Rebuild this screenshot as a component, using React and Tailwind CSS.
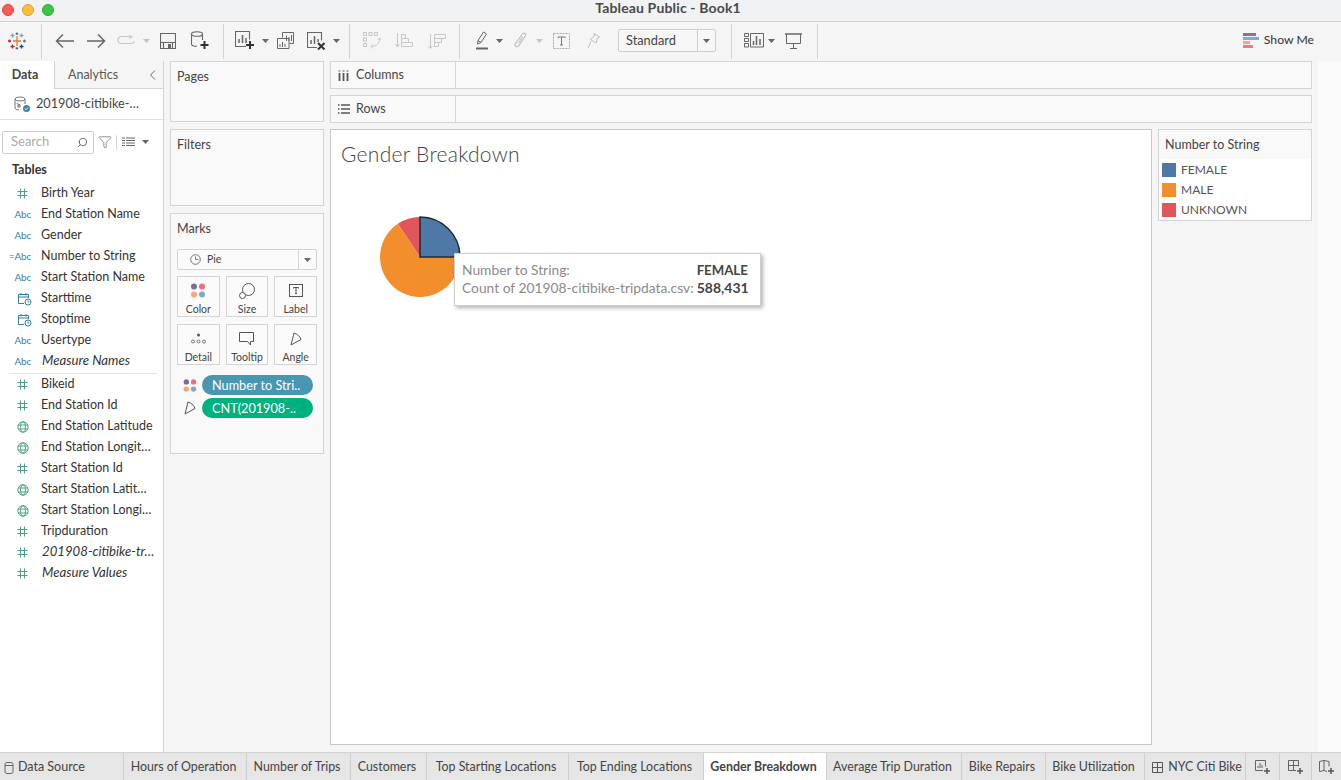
import { Search, Filter } from 'lucide-react';

const Caret = ({ className = '', color = '#666' }) => (
  <svg width="7" height="4" viewBox="0 0 7 4" className={`shrink-0 ${className}`}>
    <path d="M0 0h7L3.500 4z" fill={color} />
  </svg>
);

const Sep = ({ className = '' }) => <div className={`w-px h-[35px] mt-[2px] bg-[#d4d4d4] shrink-0 ${className}`} />;

const Hash = () => (
  <svg width="11" height="11" viewBox="0 0 11 11" fill="none" stroke="#4e9f84" strokeWidth="1" className="mr-[4px]">
    <path d="M3.500 0.500v10M7.500 0.500v10M0.500 3.500h10M0.500 7.500h10" />
  </svg>
);

const Globe = () => (
  <svg width="12" height="12" viewBox="0 0 12 12" fill="none" stroke="#3f9c7e" strokeWidth="0.9" className="mr-[3px]">
    <circle cx="6" cy="6" r="5.200" />
    <ellipse cx="6" cy="6" rx="2.400" ry="5.200" />
    <path d="M1 4h10M1 8h10" />
  </svg>
);

const Calendar = () => (
  <svg width="15" height="14" viewBox="0 0 15 14" fill="none" stroke="#2f7f9f" strokeWidth="1">
    <path d="M7 11.500H1.500v-9h10V6M1.500 5h10M4 1v2.500M9 1v2.500" />
    <circle cx="11" cy="10" r="3" />
    <path d="M11 8.500V10h1.400" />
  </svg>
);

const Abc = ({ eq }) => (
  <span className="block pr-[1px] -mt-[1px] text-[10px] leading-none text-[#3d7f9c] tracking-[-0.2px]">{eq ? '=Abc' : 'Abc'}</span>
);

const Field = ({ type, name, italic }) => {
  return (
    <div className="flex items-center h-[21px]">
      <div className="w-[32px] flex justify-end items-center shrink-0">
        {type === 'hash' && <Hash />}
        {type === 'globe' && <Globe />}
        {type === 'cal' && <Calendar />}
        {type === 'abc' && <Abc />}
        {type === 'eq' && <Abc eq />}
      </div>
      <span className={`whitespace-nowrap text-[#333] ${italic ? 'ml-[10px] -mt-[2px] italic text-[13.2px]' : 'ml-[9px] text-[12.5px]'}`}>{name}</span>
    </div>
  );
};

const dims = [
  ['hash', 'Birth Year'],
  ['abc', 'End Station Name'],
  ['abc', 'Gender'],
  ['eq', 'Number to String'],
  ['abc', 'Start Station Name'],
  ['cal', 'Starttime'],
  ['cal', 'Stoptime'],
  ['abc', 'Usertype'],
  ['abc', 'Measure Names', true],
];

const measures = [
  ['hash', 'Bikeid'],
  ['hash', 'End Station Id'],
  ['globe', 'End Station Latitude'],
  ['globe', 'End Station Longit…'],
  ['hash', 'Start Station Id'],
  ['globe', 'Start Station Latit…'],
  ['globe', 'Start Station Longi…'],
  ['hash', 'Tripduration'],
  ['hash', '201908-citibike-tr…', true],
  ['hash', 'Measure Values', true],
];

const MarkBtn = ({ label, children }) => (
  <div className="h-[41px] border border-[#d4d4d4] bg-[#fbfbfb] flex flex-col items-center">
    <div className="h-[23px] flex items-center justify-center mt-[2px]">{children}</div>
    <span className="mt-[1px] text-[10.5px] leading-[13px] text-[#444]">{label}</span>
  </div>
);

const Dots = () => (
  <svg width="16" height="15" viewBox="0 0 16 15">
    <circle cx="4" cy="3.500" r="3" fill="#7f6b96" />
    <circle cx="12" cy="3.500" r="3" fill="#ef6f7f" />
    <circle cx="4" cy="11.500" r="3" fill="#f2a878" />
    <circle cx="12" cy="11.500" r="3" fill="#7fa8d0" />
  </svg>
);

const Angle = () => (
  <svg width="12" height="14" viewBox="0 0 12 14" fill="none" stroke="#555">
    <path d="M1 13L4 1c3.500 1 6 3.500 7 6.500z" />
  </svg>
);

const tabs = [
  ['w-[123px]', 'Hours of Operation'],
  ['w-[104px]', 'Number of Trips'],
  ['w-[76px]', 'Customers'],
  ['w-[142px]', 'Top Starting Locations'],
  ['w-[135px]', 'Top Ending Locations'],
  ['w-[123px]', 'Gender Breakdown', true],
  ['w-[135px]', 'Average Trip Duration'],
  ['w-[84px]', 'Bike Repairs'],
  ['w-[99px]', 'Bike Utilization'],
];

const legend = [
  ['bg-[#4e79a7]', 'FEMALE'],
  ['bg-[#f28e2b]', 'MALE'],
  ['bg-[#e15759]', 'UNKNOWN'],
];

const App = () => {
  return (
    <div className="w-[1341px] h-[780px] overflow-hidden flex flex-col bg-[#f5f5f5] font-['Lato',sans-serif] text-[#333]">
      {/* title bar */}
      <div className="h-[22px] shrink-0 bg-[#f1f2f4] border-b border-[#d2d2d2] flex items-center relative">
        <div className="flex gap-[8px] ml-[2px] mb-[1px]">
          <div className="w-[12px] h-[12px] rounded-full bg-[#f95c57] border border-[#e0443e]" />
          <div className="w-[12px] h-[12px] rounded-full bg-[#fdbb40] border border-[#dea123]" />
          <div className="w-[12px] h-[12px] rounded-full bg-[#3ec548] border border-[#2aac2c]" />
        </div>
        <div className="absolute left-0 right-[5px] top-0 text-center text-[14px] tracking-[0.15px] leading-[15px] font-bold text-[#4a4a4a]">Tableau Public - Book1</div>
      </div>

      {/* toolbar */}
      <div className="h-[39px] shrink-0 bg-[#f5f5f5] flex items-center pb-[2px]">
        <svg width="18" height="18" viewBox="0 0 18 18" className="ml-[8px] shrink-0" strokeWidth="1.300" fill="none">
          <path d="M9 4v10M5 9h8" stroke="#e8762b" />
          <path d="M4.500 1.500v4M2.500 3.500h4M13.500 1.500v4M11.500 3.500h4" stroke="#7ba7c4" />
          <path d="M4.500 12.500v4M2.500 14.500h4" stroke="#c72035" />
          <path d="M13.500 12.500v4M11.500 14.500h4" stroke="#1f447a" />
          <path d="M1.500 7.500v3M0 9h3" stroke="#c72035" />
          <path d="M16.500 7.500v3M15 9h3" stroke="#59879b" />
          <path d="M9 .5v2.500M7.700 1.700h2.600M9 15v2.500M7.700 16.300h2.600" stroke="#5b6591" />
        </svg>
        <Sep className="ml-[15px]" />
        <svg width="19" height="16" viewBox="0 0 19 16" className="ml-[13px] shrink-0" fill="none" stroke="#666" strokeWidth="1.500">
          <path d="M19 8H1.500M8 1.500L1.500 8 8 14.500" />
        </svg>
        <svg width="19" height="16" viewBox="0 0 19 16" className="ml-[13px] shrink-0" fill="none" stroke="#666" strokeWidth="1.500">
          <path d="M0 8h17.500M11 1.500L17.500 8 11 14.500" />
        </svg>
        <svg width="19" height="11" viewBox="0 0 19 11" className="ml-[11px] shrink-0" fill="none" stroke="#c8c8c8" strokeWidth="1.200">
          <path d="M14 1.500H4.500a3.500 3.500 0 0 0 0 7h10a3.500 3.500 0 0 0 3-2M12 .5l3 1.500-3 1.500" />
        </svg>
        <Caret color="#c4c4c4" className="ml-[7px]" />
        <svg width="16" height="16" viewBox="0 0 16 16" className="ml-[10px] shrink-0" fill="none" stroke="#666" strokeWidth="1.100">
          <path d="M.5.500h15v15H.500zM.500 9.500h15M3.500 15.500v-6h9v6" />
          <rect x="8" y="11" width="3" height="4" fill="#666" stroke="none" />
        </svg>
        <svg width="18" height="19" viewBox="0 0 18 19" className="ml-[15px] shrink-0" fill="none" stroke="#666" strokeWidth="1.100">
          <ellipse cx="6" cy="3" rx="5.500" ry="2.300" />
          <path d="M.5 3v10c0 1.400 2.200 2.300 5.500 2.300M11.500 3v6" />
          <path d="M13.500 10v8M9.500 14h8" stroke="#333" strokeWidth="2" />
        </svg>
        <Sep className="ml-[14px]" />
        <svg width="21" height="19" viewBox="0 0 21 19" className="ml-[11px] shrink-0" fill="none" stroke="#666" strokeWidth="1.100">
          <path d="M11 15.500H.5V.5h14v8" />
          <path d="M4 12V8M7.500 12V4M11 12V7" strokeWidth="1.500" />
          <path d="M15 10v8M11 14h8" stroke="#333" strokeWidth="2" />
        </svg>
        <Caret className="ml-[6px]" />
        <svg width="17" height="17" viewBox="0 0 17 17" className="ml-[8px] shrink-0" fill="none" stroke="#666" strokeWidth="1">
          <path d="M5.500 5.500V.5h11v11h-4" />
          <path d="M.5 6.500h11.500v10H.500z" fill="#f5f5f5" />
          <path d="M3 15v-3M5.500 15v-5M8 15v-3M9.500 9V3.500M12 9V5M14.500 9V3" />
        </svg>
        <svg width="19" height="18" viewBox="0 0 19 18" className="ml-[13px] shrink-0" fill="none" stroke="#666" strokeWidth="1.100">
          <path d="M10 15.500H.5V.5h14v8" />
          <path d="M4 12V8M7.500 12V4M11 10V7" strokeWidth="1.500" />
          <path d="M11 11l6.500 6.500M17.500 11L11 17.500" stroke="#333" strokeWidth="2" />
        </svg>
        <Caret className="ml-[7px]" />
        <Sep className="ml-[9px]" />
        <svg width="18" height="17" viewBox="0 0 18 17" className="ml-[13px] shrink-0" fill="none" stroke="#c8c8c8" strokeWidth="1">
          <rect x=".5" y=".5" width="3" height="3" />
          <rect x="6" y=".5" width="3" height="3" />
          <rect x="11.500" y=".5" width="3" height="3" />
          <rect x=".5" y="6" width="3" height="3" />
          <rect x=".5" y="11.500" width="3" height="3" />
          <path d="M16.500 6c.5 5-2.500 8-8 8.500M14.500 8l2-2 1.500 2M10 12.500l-2 2 2 2" />
        </svg>
        <svg width="18" height="16" viewBox="0 0 18 16" className="ml-[14px] shrink-0" fill="none" stroke="#c8c8c8" strokeWidth="1">
          <path d="M2.500 0v13M.5 11l2 3 2-3" />
          <path d="M6.500 1.500h4v4h-4zM6.500 5.500h7v4h-7zM6.500 9.500h11v4h-11z" />
        </svg>
        <svg width="18" height="16" viewBox="0 0 18 16" className="ml-[15px] shrink-0" fill="none" stroke="#c8c8c8" strokeWidth="1">
          <path d="M2.500 1v14M.5 13l2 2.500 2-2.500" />
          <path d="M6.500 1.500h11v4h-11zM6.500 5.500h7v4h-7zM6.500 9.500h4v4h-4z" />
        </svg>
        <Sep className="ml-[13px]" />
        <svg width="12" height="19" viewBox="0 0 12 19" className="ml-[16px] shrink-0" fill="none" stroke="#666">
          <path d="M1.500 13l.5-3.500L7.500 1l3 2L5 11.500zM2 9.500l3 2" />
          <path d="M0 17.500h12" strokeWidth="2" />
        </svg>
        <Caret className="ml-[8px]" />
        <svg width="13" height="17" viewBox="0 0 13 17" className="ml-[11px] shrink-0" fill="none" stroke="#bdbdbd" strokeWidth="1.100">
          <path d="M3 9.500L8.500 2c1.500-1.800 4-.2 3 1.700L5 13.500c-1.500 2.500-5 .8-3.800-1.800L7.500 3.500M4.500 11L9 4.500" />
        </svg>
        <Caret color="#c4c4c4" className="ml-[9px]" />
        <svg width="17" height="16" viewBox="0 0 17 16" className="ml-[10px] shrink-0" fill="none">
          <rect x=".5" y=".5" width="16" height="15" stroke="#aaa" strokeDasharray="2 1" />
          <path d="M5 5V4h7v1M8.500 4v8M7 12h3" stroke="#777" />
        </svg>
        <svg width="13" height="16" viewBox="0 0 13 16" className="ml-[17px] shrink-0" fill="none" stroke="#bdbdbd">
          <path d="M7 .5l5.500 3.500-2 1-1.500 5-5.500-3.500 4-3.500zM4 8.500L1 15" />
        </svg>
        <div className="ml-[18px] w-[98px] h-[23px] shrink-0 border border-[#cfcfcf] rounded-[2px] bg-[#f7f7f7] flex items-center">
          <span className="flex-1 pl-[7px] text-[12.8px] text-[#444]">Standard</span>
          <div className="w-[18px] h-full border-l border-[#cfcfcf] flex items-center justify-center">
            <Caret />
          </div>
        </div>
        <Sep className="ml-[15px]" />
        <svg width="20" height="15" viewBox="0 0 20 15" className="ml-[12px] shrink-0" fill="none" stroke="#666">
          <path d="M.5.500h4v3h-4zM.5 5.500h4v3h-4zM.5 10.500h4v3.500h-4zM6.500.5h13v13.500h-13z" />
          <path d="M9.500 12V8M12.500 12V3M16 12V6" strokeWidth="1.500" />
        </svg>
        <Caret className="ml-[4px]" />
        <svg width="17" height="16" viewBox="0 0 17 16" className="ml-[10px] shrink-0" fill="none" stroke="#666">
          <path d="M0 1h17" strokeWidth="1.500" />
          <path d="M1.500 1v9.500h14V1M8.500 10.500V15M5 15.500h7" />
        </svg>
        <Sep className="ml-[15px]" />
        <div className="ml-auto mr-[27px] flex items-center gap-[5px]">
          <svg width="16" height="15" viewBox="0 0 16 15">
            <rect x="0" y="0" width="13" height="3" fill="#8a7198" />
            <rect x="0" y="4" width="16" height="3" fill="#85a9d3" />
            <rect x="0" y="8" width="7" height="3" fill="#f3a77a" />
            <rect x="0" y="12" width="10" height="3" fill="#f27a86" />
          </svg>
          <span className="text-[12.2px] text-[#333]">Show Me</span>
        </div>
      </div>

      {/* main */}
      <div className="flex-1 min-h-0 flex">
        {/* data pane */}
        <div className="w-[164px] shrink-0 bg-white border-r border-[#d4d4d4] flex flex-col">
          <div className="h-[28px] shrink-0 flex text-[12.5px]">
            <div className="w-[55px] border-r border-[#d4d4d4] flex items-center justify-center pr-[4px] pt-[1px] font-bold text-[#444]">Data</div>
            <div className="flex-1 bg-[#f5f5f5] border-b border-[#d4d4d4] flex items-center pl-[13px] pt-[1px] text-[#555]">
              Analytics
              <svg width="7" height="10" viewBox="0 0 7 10" className="ml-auto mr-[7px]" fill="none" stroke="#666">
                <path d="M6 .5L1.500 5 6 9.500" />
              </svg>
            </div>
          </div>
          <div className="h-[31px] shrink-0 border-b border-[#e2e2e2] flex items-center">
            <svg width="17" height="17" viewBox="0 0 17 17" className="ml-[14px] shrink-0" fill="none" stroke="#666" strokeWidth=".9">
              <ellipse cx="6" cy="3" rx="5" ry="2" />
              <path d="M1 3v9c0 1 1.500 1.800 4 2M11 3v5M3 7c0 1 1.500 1.500 3 1.500M3 10h4M5 8v4" />
              <circle cx="12.500" cy="12.500" r="3.500" fill="#3d85ab" stroke="none" />
              <path d="M10.800 12.500l1.200 1.200 2-2.200" stroke="#fff" />
            </svg>
            <span className="ml-[5px] text-[12.7px] text-[#444] whitespace-nowrap">201908-citibike-…</span>
          </div>
          <div className="h-[34px] shrink-0 flex items-center pl-[2px] pt-[10px]">
            <div className="w-[92px] h-[23px] border border-[#cfcfcf] rounded-[2px] flex items-center justify-between pl-[8px] pr-[5px]">
              <span className="text-[13px] text-[#aaa]">Search</span>
              <Search size={11} color="#555" strokeWidth={1.8} className="-scale-x-100" />
            </div>
            <Filter size={14} color="#666" strokeWidth={1.200} className="ml-[4px]" />
            <div className="w-px h-[15px] bg-[#d4d4d4] ml-[4px]" />
            <svg width="13" height="10" viewBox="0 0 13 10" className="ml-[5px]" fill="none" stroke="#666">
              <path d="M0 1h3M4 1h9M0 3.500h3M4 3.500h9M0 6h3M4 6h9M0 8.500h3M4 8.500h9" />
            </svg>
            <Caret className="ml-[7px]" />
          </div>
          <div className="pl-[12px] pt-[7px] h-[29px] shrink-0 text-[12.5px] font-bold text-[#333]">Tables</div>
          {dims.map(([t, n, i]) => (
            <Field key={n} type={t} name={n} italic={i} />
          ))}
          <div className="h-px bg-[#e2e2e2] ml-[9px] mr-[6px] mt-[1px]" />
          {measures.map(([t, n, i]) => (
            <Field key={n} type={t} name={n} italic={i} />
          ))}
        </div>

        {/* shelves column */}
        <div className="w-[166px] shrink-0 flex flex-col pl-[6px] pr-[6px]">
          <div className="h-[61px] shrink-0 border border-[#d4d4d4] bg-[#f9f9f9] pl-[6px] pt-[6px] text-[12.5px] text-[#444]">Pages</div>
          <div className="h-[77px] mt-[7px] shrink-0 border border-[#d4d4d4] bg-[#f9f9f9] pl-[6px] pt-[6px] text-[12.5px] text-[#444]">Filters</div>
          <div className="h-[241px] mt-[7px] shrink-0 border border-[#d4d4d4] bg-[#f9f9f9] px-[6px] pt-[7px]">
            <div className="text-[12.5px] leading-[15px] text-[#444]">Marks</div>
            <div className="mt-[13px] h-[21px] border border-[#d4d4d4] rounded-[2px] bg-[#fbfbfb] flex items-center">
              <svg width="11" height="11" viewBox="0 0 11 11" className="ml-[12px]" fill="none" stroke="#777">
                <circle cx="5.500" cy="5.500" r="4.800" />
                <path d="M5.500 2.500v3h3" />
              </svg>
              <span className="ml-[6px] flex-1 text-[10.5px] text-[#444]">Pie</span>
              <div className="w-[18px] h-full border-l border-[#d4d4d4] flex items-center justify-center"><Caret /></div>
            </div>
            <div className="grid grid-cols-3 gap-x-[6px] gap-y-[7px] mt-[6px]">
              <MarkBtn label="Color"><Dots /></MarkBtn>
              <MarkBtn label="Size">
                <svg width="16" height="16" viewBox="0 0 16 16" fill="none" stroke="#555">
                  <circle cx="9.500" cy="6.500" r="6" fill="#fbfbfb" />
                  <circle cx="3.500" cy="12.500" r="3" fill="#fbfbfb" />
                </svg>
              </MarkBtn>
              <MarkBtn label="Label">
                <svg width="14" height="13" viewBox="0 0 14 13" fill="none" stroke="#555">
                  <rect x=".5" y=".5" width="13" height="12" />
                  <path d="M4.500 4.500v-1h5v1M7 3.500v6M6 9.500h2" />
                </svg>
              </MarkBtn>
              <MarkBtn label="Detail">
                <svg width="15" height="11" viewBox="0 0 15 11" fill="none" stroke="#555" strokeWidth=".8">
                  <circle cx="7.500" cy="2" r="1.500" fill="#555" stroke="none" />
                  <circle cx="2" cy="8.500" r="1.500" />
                  <circle cx="7.500" cy="8.500" r="1.500" />
                  <circle cx="13" cy="8.500" r="1.500" />
                </svg>
              </MarkBtn>
              <MarkBtn label="Tooltip">
                <svg width="15" height="14" viewBox="0 0 15 14" fill="none" stroke="#555">
                  <path d="M.5.500h14v9h-3v3.500l-3-3.500H.500z" />
                </svg>
              </MarkBtn>
              <MarkBtn label="Angle"><Angle /></MarkBtn>
            </div>
            <div className="flex items-center mt-[10px]">
              <div className="w-[25px] flex justify-center scale-90"><Dots /></div>
              <div className="w-[111px] h-[20px] rounded-full bg-[#4996b2] text-white text-[12.7px] leading-[20px] pl-[10px] whitespace-nowrap">Number to Stri..</div>
            </div>
            <div className="flex items-center mt-[3px]">
              <div className="w-[25px] flex justify-center"><Angle /></div>
              <div className="w-[111px] h-[20px] rounded-full bg-[#00b180] text-white text-[12.7px] leading-[20px] pl-[10px] whitespace-nowrap">CNT(201908-..</div>
            </div>
          </div>
        </div>

        {/* view area */}
        <div className="flex-1 flex flex-col min-w-0 pr-[6px] pb-[7px]">
          <div className="h-[28px] shrink-0 border border-[#d4d4d4] bg-[#f9f9f9] flex items-center">
            <div className="w-[125px] h-full border-r border-[#d4d4d4] flex items-center pl-[7px]">
              <svg width="11" height="11" viewBox="0 0 11 11" fill="none" stroke="#555" strokeWidth="1.800">
                <path d="M1.500 3v8M5.500 3v8M9.500 3v8" />
                <path d="M.5 1h2M4.500 1h2M8.500 1h2" strokeWidth="1.200" />
              </svg>
              <span className="ml-[7px] text-[12.5px] text-[#444]">Columns</span>
            </div>
          </div>
          <div className="h-[28px] mt-[6px] shrink-0 border border-[#d4d4d4] bg-[#f9f9f9] flex items-center">
            <div className="w-[125px] h-full border-r border-[#d4d4d4] flex items-center pl-[7px]">
              <svg width="12" height="10" viewBox="0 0 12 10" fill="none" stroke="#555" strokeWidth="1.500">
                <path d="M3 1h9M3 5h9M3 9h9M0 1h1.500M0 5h1.500M0 9h1.500" />
              </svg>
              <span className="ml-[6px] text-[12.5px] text-[#444]">Rows</span>
            </div>
          </div>
          <div className="flex-1 min-h-0 flex mt-[6px] gap-[6px]">
            {/* canvas */}
            <div className="w-[822px] shrink-0 h-full border border-[#c6c6c6] bg-white relative pl-[10px] pt-[11px]">
              <div className="text-[21px] leading-[26px] font-light text-[#444] tracking-[0.3px]">Gender Breakdown</div>
              <svg width="84" height="84" viewBox="0 0 84 84" className="mt-[48px] ml-[37px]">
                <path d="M42 42L19.800 8.700A40 40 0 0 1 42 2z" fill="#e15759" />
                <path d="M42 42H82A40 40 0 1 1 19.800 8.700z" fill="#f28e2b" />
                <path d="M42 42V2A40 40 0 0 1 82 42z" fill="#4e79a7" stroke="#1d2a3a" strokeWidth="1.500" />
              </svg>
              <div className="absolute left-[123px] top-[123px] w-[307px] h-[53px] bg-white border border-[#cfcfcf] shadow-[2px_2px_4px_rgba(0,0,0,0.3)] pl-[7px] pt-[7px] leading-[18px] grid grid-cols-[auto_1fr] gap-x-[3px] content-start whitespace-nowrap">
                <span className="text-[13.8px] text-[#8a8a8a]">Number to String:</span>
                <span className="text-[13.2px] font-bold text-[#444]">FEMALE</span>
                <span className="text-[13.8px] text-[#8a8a8a]">Count of 201908-citibike-tripdata.csv:</span>
                <span className="text-[14px] font-bold text-[#444]">588,431</span>
              </div>
            </div>
            {/* legend */}
            <div className="w-[154px] shrink-0 h-[92px] border border-[#d4d4d4] bg-white">
              <div className="h-[29px] bg-[#f9f9f9] pl-[6px] text-[12.5px] leading-[29px] text-[#444]">Number to String</div>
              <div className="flex flex-col pl-[3px] pt-[1px]">
                {legend.map(([c, n]) => (
                  <div key={n} className="h-[20px] flex items-center gap-[5px]">
                    <div className={`w-[14px] h-[14px] ${c}`} />
                    <span className="text-[12px] text-[#555]">{n}</span>
                  </div>
                ))}
              </div>
            </div>
          </div>
        </div>
        <div className="w-[23px] shrink-0 bg-[#fafafa]" />
      </div>

      {/* sheet tabs */}
      <div className="h-[28px] shrink-0 bg-[#e6e6e6] border-t border-[#d4d4d4] flex text-[12.4px] text-[#444]">
        <div className="w-[124px] shrink-0 border-r border-[#cfcfcf] flex items-center pl-[4px] pt-[2px]">
          <svg width="10" height="12" viewBox="0 0 10 12" fill="none" stroke="#666">
            <rect x="1" y=".5" width="8" height="11" rx="2" />
            <path d="M1 3.500h8" />
          </svg>
          <span className="ml-[4px] text-[12.5px]">Data Source</span>
        </div>
        {tabs.map(([w, n, active]) => (
          <div key={n} className={`${w} shrink-0 border-r border-[#cfcfcf] flex items-center justify-center pt-[2px] pr-[3px] whitespace-nowrap ${active ? 'bg-white font-bold' : ''}`}>{n}</div>
        ))}
        <div className="w-[101px] shrink-0 border-r border-[#cfcfcf] flex items-center justify-center pt-[2px] pl-[4px] whitespace-nowrap">
          <svg width="11" height="11" viewBox="0 0 11 11" fill="none" stroke="#555">
            <path d="M.5.500h10v10H.500zM5.500.5v10M.5 5.500h10" />
          </svg>
          <span className="ml-[5px]">NYC Citi Bike</span>
        </div>
        <div className="w-[34px] shrink-0 border-r border-[#cfcfcf] flex items-center justify-center">
          <svg width="15" height="14" viewBox="0 0 15 14" fill="none" stroke="#555">
            <path d="M8 10.500H.5V.5h10v6M3 8V6M5 8V3M7 8V5" strokeWidth=".9" />
            <path d="M12 8v6M9 11h6" strokeWidth="1.500" />
          </svg>
        </div>
        <div className="w-[32px] shrink-0 border-r border-[#cfcfcf] flex items-center justify-center">
          <svg width="15" height="14" viewBox="0 0 15 14" fill="none" stroke="#555">
            <path d="M8 10.500H.5V.5h10v6M5.500.5v10M.5 5.500h10" strokeWidth=".9" />
            <path d="M12 8v6M9 11h6" strokeWidth="1.500" />
          </svg>
        </div>
        <div className="flex-1 flex items-center justify-center">
          <svg width="15" height="14" viewBox="0 0 15 14" fill="none" stroke="#555">
            <path d="M8 11.500l-3-1-4.500 1V1.500l4.500-1 5 1v5M5 .5v10" strokeWidth=".9" />
            <path d="M12 8v6M9 11h6" strokeWidth="1.500" />
          </svg>
        </div>
      </div>
    </div>
  );
};

export default App;
